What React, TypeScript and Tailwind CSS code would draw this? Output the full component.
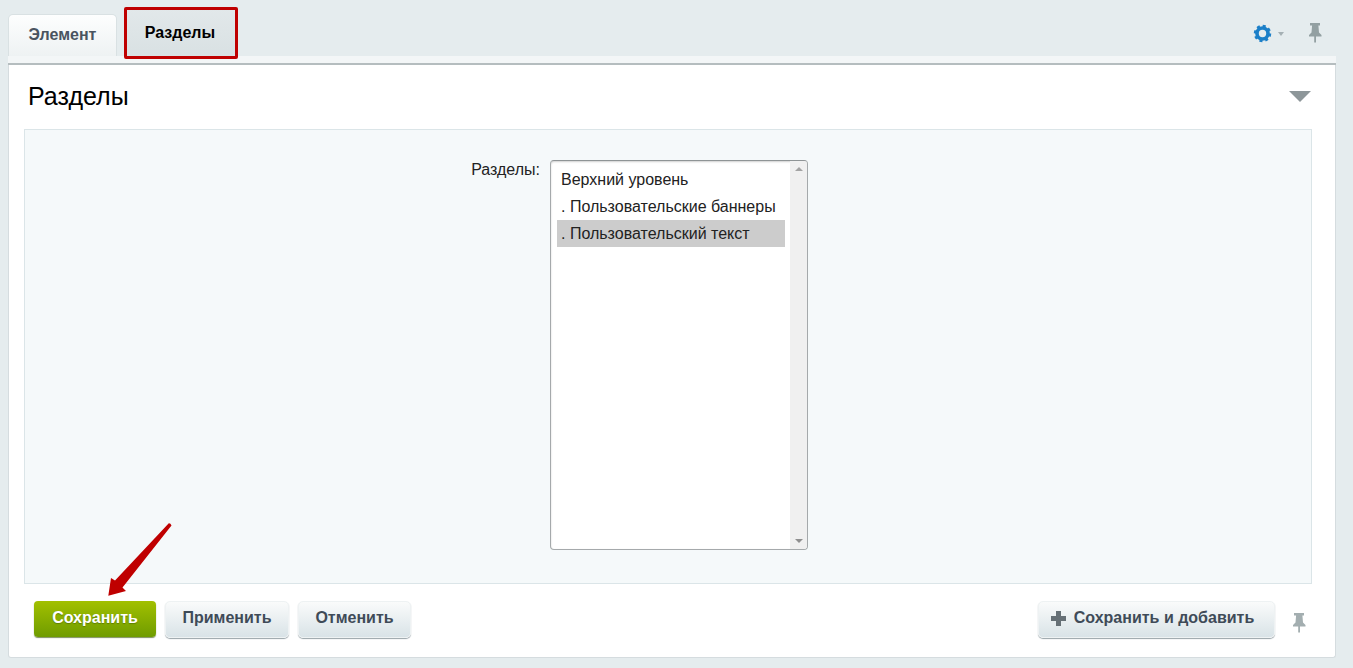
function Pin({ className }: { className?: string }) {
  return (
    <svg viewBox="0 0 14 20" className={className} fill="currentColor">
      <path d="M2 0h10v2.5h-1.6l.6 7 2.5 2.5v1.5H8v6H6.2v-6H1V12l2.5-2.5.6-7H2z" />
    </svg>
  );
}

function Gear() {
  return (
    <svg viewBox="0 0 20 20" className="w-[19px] h-[19px] text-[#1b7fc8]" fill="none" stroke="currentColor">
      <circle cx="10" cy="10" r="5.8" strokeWidth="3.8" />
      <circle cx="10" cy="10" r="8" strokeWidth="2.4" strokeDasharray="3.2 3.08" />
    </svg>
  );
}

function PlusIcon() {
  return (
    <svg viewBox="0 0 15 15" className="mr-[8px] h-[15px] w-[15px] text-[#667076]" fill="currentColor">
      <path d="M5 0h5v5h5v5h-5v5H5v-5H0V5h5z" />
    </svg>
  );
}

function FooterButton({ label, green, icon }: { label: string; green?: boolean; icon?: boolean }) {
  return (
    <button
      className={
        green
          ? "h-[36px] w-[122px] rounded-[4px] bg-gradient-to-b from-[#a2c000] to-[#6f9c00] pb-[2px] text-[16px] font-bold text-white shadow-[0_1px_1px_#7f8f60] [text-shadow:0_1px_1px_#5f7f00]"
          : icon
            ? "flex h-[37px] w-full items-center justify-center rounded-[5px] border border-[#eef2f3] bg-gradient-to-b from-[#fafbfb] to-[#d9e3e7] pb-[3px] pr-[8px] text-[16px] font-bold text-[#3f4b58] shadow-[0_1px_1px_#98a3a8]"
            : "flex h-[37px] w-full items-center justify-center rounded-[5px] border border-[#eef2f3] bg-gradient-to-b from-[#fafbfb] to-[#d9e3e7] pb-[3px] text-[16px] font-bold text-[#3f4b58] shadow-[0_1px_1px_#98a3a8]"
      }
    >
      {icon && <PlusIcon />}
      {label}
    </button>
  );
}

export default function App() {
  return (
    <div className="relative h-[668px] w-full overflow-hidden bg-[#e5ecee] pl-[8px] pr-[17px] font-['Liberation_Sans',Arial,sans-serif] text-[#111]">
      {/* tabs */}
      <div className="flex h-[56px] items-end justify-between">
        <div className="flex items-end">
          <div className="flex h-[42px] w-[109px] items-center justify-center rounded-t-[5px] border border-b-0 border-[#d9e1e3] bg-gradient-to-b from-[#fdfefe] to-[#eef2f3] pb-[2px] text-[16px] font-bold text-[#4a5460]">
            Элемент
          </div>
          <div className="ml-[8px] flex h-[47px] w-[110px] items-center justify-center bg-gradient-to-b from-[#e2e8ea] to-[#d9e1e3] text-[16px] font-bold text-black">
            Разделы
          </div>
        </div>
        <div className="mr-[14px] flex items-center self-start pt-[23px]">
          <Gear />
          <div className="ml-[6px] mt-[1px] h-0 w-0 border-x-[3.5px] border-t-[4px] border-x-transparent border-t-[#a5b0b4]" />
          <Pin className="ml-[24px] h-[20px] w-[14px] text-[#93a0a2]" />
        </div>
      </div>

      {/* strip over the card */}
      <div className="h-[9px] border-b-[2px] border-b-[#b5bdbf] bg-[#f3f6f7]" />

      {/* card */}
      <div className="h-[593px] rounded-b-[3px] border border-t-0 border-[#d5dcdf] bg-white pl-[15px] pr-[23px]">
        <div className="flex h-[64px] items-center justify-between pl-[4px] pr-[1px]">
          <h2 className="pb-[2px] text-[25px] font-normal leading-none text-black">Разделы</h2>
          <div className="mb-[2px] h-0 w-0 border-x-[11px] border-t-[11px] border-x-transparent border-t-[#8d9699]" />
        </div>

        <div className="flex h-[455px] border border-[#dbe5e8] bg-[#f5f9fa] pl-[445px] pt-[30px]">
          <div className="w-[70px] shrink-0 pt-[1px] text-right text-[16px] leading-[18px] text-[#222]">Разделы:</div>
          <div className="ml-[10px] flex h-[390px] w-[258px] shrink-0 rounded-[4px] border border-[#a5a9ab] border-t-[#8f9496] bg-white shadow-[inset_0_1px_2px_#d0d0d0]">
            <div className="flex-1 pl-[6px] pr-[5px] pt-[5px] text-[16px] text-[#222]">
              <div className="flex h-[27px] items-center pl-[4px]">Верхний уровень</div>
              <div className="flex h-[27px] items-center pl-[4px]">. Пользовательские баннеры</div>
              <div className="flex h-[27px] items-center bg-[#cccccc] pl-[4px]">. Пользовательский текст</div>
            </div>
            <div className="flex w-[17px] flex-col items-center justify-between rounded-r-[3px] bg-[#f0f0f0] py-[6px]">
              <div className="h-0 w-0 border-x-[4px] border-b-[4px] border-x-transparent border-b-[#a3a3a3]" />
              <div className="h-0 w-0 border-x-[4px] border-t-[4px] border-x-transparent border-t-[#8f8f8f]" />
            </div>
          </div>
        </div>

        <div className="flex items-start pl-[10px] pt-[17px]">
          <FooterButton label="Сохранить" green />
          <div className="ml-[9px] w-[124px]">
            <FooterButton label="Применить" />
          </div>
          <div className="ml-[9px] w-[113px]">
            <FooterButton label="Отменить" />
          </div>
          <div className="ml-auto w-[237px]">
            <FooterButton label="Сохранить и добавить" icon />
          </div>
          <Pin className="ml-[17px] mr-[6px] mt-[12px] h-[20px] w-[14px] text-[#a3aeb0]" />
        </div>
      </div>

      {/* red annotations drawn over the screenshot */}
      <div className="absolute left-[124px] top-[7px] h-[52px] w-[114px] rounded-[2px] border-[3px] border-[#bf0000]" />
      <svg className="absolute left-[105px] top-[520px] h-[80px] w-[70px]" viewBox="0 0 70 80" fill="#bf0000">
        <path d="M63.8 3.2 Q65.5 3 66.5 5.5 L17.5 67.5 L21 71 L3.3 75.7 L6 58 L10 60.5 Z" />
      </svg>
    </div>
  );
}
